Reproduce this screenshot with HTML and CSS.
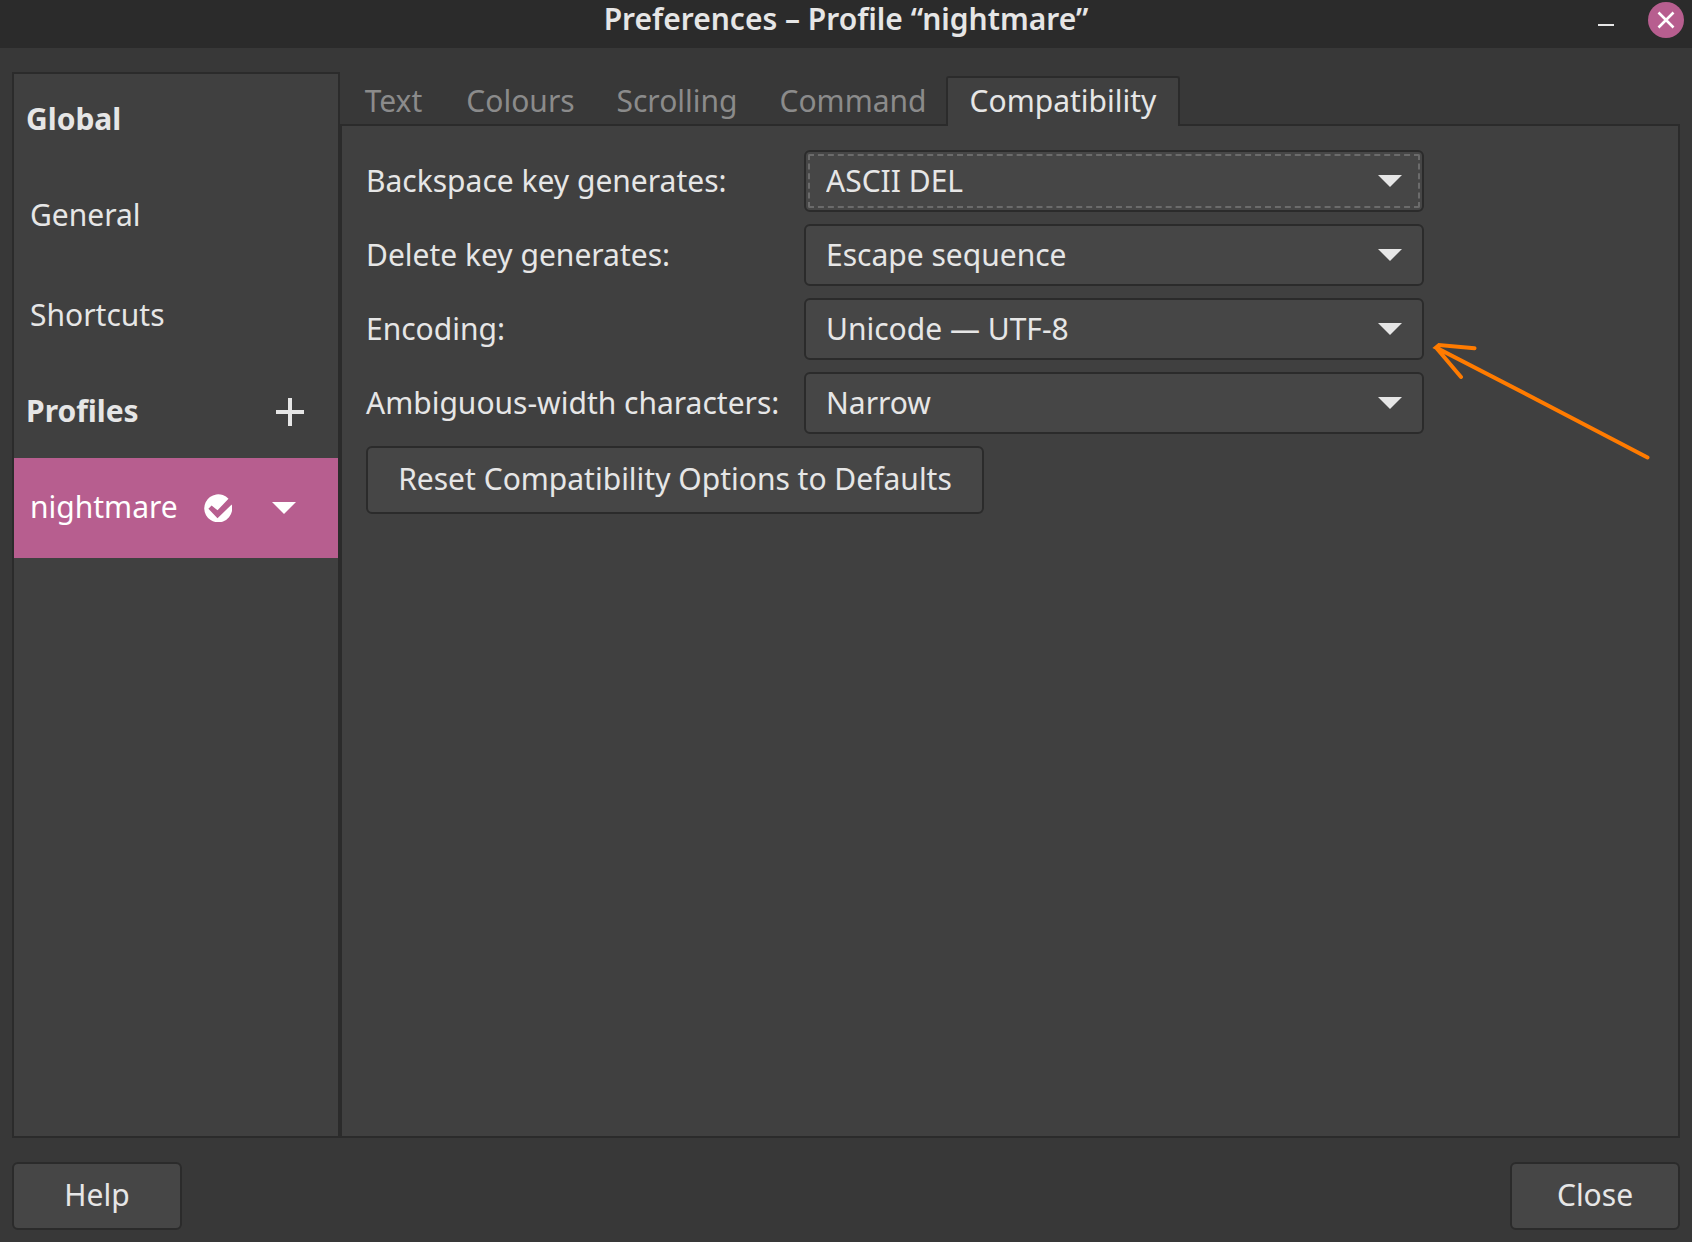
FILE: index.html
```html
<!DOCTYPE html>
<html lang="en-GB">
<head>
<meta charset="utf-8">
<title>Preferences – Profile “nightmare”</title>
<link rel="stylesheet" href="styles.css">
</head>
<body>
<header class="titlebar">
  <h1 class="title">Preferences – Profile “nightmare”</h1>
  <div class="window-controls">
    <button class="window-button" type="button" aria-label="Minimise">
      <svg width="36" height="36" viewBox="0 0 36 36" aria-hidden="true"><path d="M10 23h16" stroke="#e6e6e6" stroke-width="2"/></svg>
    </button>
    <button class="window-button window-close" type="button" aria-label="Close window">
      <svg width="36" height="36" viewBox="0 0 36 36" fill="none" aria-hidden="true"><path d="M10.500 10.500l15 15M25.500 10.500l-15 15" stroke="#fff" stroke-width="2.600"/></svg>
    </button>
  </div>
</header>

<main class="content">
  <nav class="sidebar" aria-label="Sections">
    <div class="sidebar-heading"><h2 class="heading-text">Global</h2></div>
    <a class="sidebar-row" href="#general"><span class="row-text">General</span></a>
    <a class="sidebar-row" href="#shortcuts"><span class="row-text">Shortcuts</span></a>
    <div class="sidebar-heading">
      <h2 class="heading-text">Profiles</h2>
      <button class="icon-button" type="button" aria-label="Add profile">
        <svg width="28" height="28" viewBox="0 0 28 28" aria-hidden="true"><path d="M0 14h28M14 0v28" stroke="#e6e6e6" stroke-width="4"/></svg>
      </button>
    </div>
    <div class="sidebar-row selected">
      <a class="row-text" href="#nightmare">nightmare</a>
      <svg class="default-mark" width="28" height="28" viewBox="0 0 28 28" aria-hidden="true"><path d="M24.500 4.800A14 14 0 1 0 27.700 10.500L13.500 24.200L4.400 14.800L7.600 11.400L13.500 16.300Z" fill="#fff"/></svg>
      <button class="icon-button" type="button" aria-label="Profile menu">
        <svg width="24" height="12" viewBox="0 0 24 12" aria-hidden="true"><path d="M0 0h24L12 12z" fill="#fff"/></svg>
      </button>
    </div>
  </nav>

  <section class="notebook">
    <div class="tabs" role="tablist">
      <button class="tab" type="button" role="tab">Text</button>
      <button class="tab" type="button" role="tab">Colours</button>
      <button class="tab" type="button" role="tab">Scrolling</button>
      <button class="tab" type="button" role="tab">Command</button>
      <button class="tab active" type="button" role="tab" aria-selected="true">Compatibility</button>
    </div>
    <form class="page">
      <div class="options">
        <label for="backspace">Backspace key generates:</label>
        <div class="field">
          <select id="backspace" class="select focused"><option>ASCII DEL</option></select>
          <svg class="arrow" width="24" height="12" viewBox="0 0 24 12" aria-hidden="true"><path d="M0 0h24L12 12z"/></svg>
        </div>
        <label for="delete">Delete key generates:</label>
        <div class="field">
          <select id="delete" class="select"><option>Escape sequence</option></select>
          <svg class="arrow" width="24" height="12" viewBox="0 0 24 12" aria-hidden="true"><path d="M0 0h24L12 12z"/></svg>
        </div>
        <label for="encoding">Encoding:</label>
        <div class="field">
          <select id="encoding" class="select"><option>Unicode — UTF-8</option></select>
          <svg class="arrow" width="24" height="12" viewBox="0 0 24 12" aria-hidden="true"><path d="M0 0h24L12 12z"/></svg>
          <svg class="pointer" width="232" height="168" viewBox="0 0 232 168" fill="none" stroke="#ff7b00" stroke-width="4" stroke-linecap="round" aria-hidden="true"><path d="M223.500 159.500L123 107L12 49.500L15 47L50.500 50.200M12 49.500L37 79"/></svg>
        </div>
        <label for="width">Ambiguous-width characters:</label>
        <div class="field">
          <select id="width" class="select"><option>Narrow</option></select>
          <svg class="arrow" width="24" height="12" viewBox="0 0 24 12" aria-hidden="true"><path d="M0 0h24L12 12z"/></svg>
        </div>
      </div>
      <button class="button reset" type="button">Reset Compatibility Options to Defaults</button>
    </form>
  </section>
</main>

<footer class="actions">
  <button class="button" type="button">Help</button>
  <button class="button" type="button">Close</button>
</footer>
</body>
</html>
```

FILE: styles.css
```css
* {
  box-sizing: border-box;
}

body {
  margin: 0;
  min-height: 100vh;
  display: flex;
  flex-direction: column;
  background: #383838;
  color: #e6e6e6;
  font: 30px/36px "Noto Sans", sans-serif;
}

h1,
h2 {
  margin: 0;
  font-size: inherit;
}

button,
select {
  margin: 0;
  padding: 0;
  border: 0;
  background: none;
  color: inherit;
  font: inherit;
}

a {
  color: inherit;
  text-decoration: none;
}

svg {
  display: block;
}

.titlebar {
  display: grid;
  grid-template-columns: 1fr auto 1fr;
  height: 48px;
  padding: 2px 8px;
  background: #2b2b2b;
}

.title {
  grid-column: 2;
  font-weight: 600;
  line-height: 34px;
}

.window-controls {
  display: flex;
  justify-content: flex-end;
  gap: 24px;
}

.window-button {
  width: 36px;
  height: 36px;
  border-radius: 50%;
}

.window-close {
  background: #b75e8f;
}

.content {
  flex: 1;
  display: flex;
  padding: 24px 12px;
}

.sidebar {
  width: 328px;
  border: 2px solid #2b2b2b;
  background: #404040;
}

.sidebar-heading {
  display: flex;
  align-items: center;
  justify-content: space-between;
  height: 92px;
  padding: 0 34px 0 12px;
}

.sidebar-row {
  display: flex;
  align-items: center;
  height: 100px;
  padding: 0 42px 0 16px;
}

.selected {
  background: #b75e8f;
  color: #fff;
}

.heading-text,
.row-text {
  flex: 1;
  padding-bottom: 2px;
}

.default-mark {
  margin-right: 40px;
}

.notebook {
  flex: 1;
  display: flex;
  flex-direction: column;
  padding-top: 4px;
}

.tabs {
  display: grid;
  grid-template-columns: 107px 147px 166px 186px 234px;
  margin-bottom: -2px;
}

.tab {
  height: 50px;
  padding-bottom: 2px;
  border: 2px solid transparent;
  border-bottom: 0;
  color: #8b8b8b;
}

.active {
  border-color: #2b2b2b;
  border-radius: 3px 3px 0 0;
  background: #404040;
  color: #e6e6e6;
  z-index: 1;
}

.page {
  flex: 1;
  padding: 24px;
  border: 2px solid #2b2b2b;
  background: #404040;
}

.options {
  display: grid;
  grid-template-columns: 414px 620px;
  align-items: center;
  gap: 12px 24px;
  margin-bottom: 12px;
}

.field {
  position: relative;
}

.select {
  display: block;
  width: 100%;
  height: 62px;
  padding: 0 60px 0 20px;
  border: 2px solid #2b2b2b;
  border-radius: 6px;
  background: #464646;
  appearance: none;
}

.focused {
  outline: 2px dashed #6b6b6b;
  outline-offset: -6px;
}

.arrow {
  position: absolute;
  top: 25px;
  right: 22px;
  fill: #e6e6e6;
  pointer-events: none;
}

.pointer {
  position: absolute;
  top: 0;
  left: 100%;
  pointer-events: none;
}

.button {
  min-width: 170px;
  height: 68px;
  padding: 0 24px 2px;
  border: 2px solid #2b2b2b;
  border-radius: 6px;
  background: #464646;
}

.reset {
  min-width: 618px;
}

.actions {
  display: flex;
  justify-content: space-between;
  padding: 0 12px 12px;
}
```
